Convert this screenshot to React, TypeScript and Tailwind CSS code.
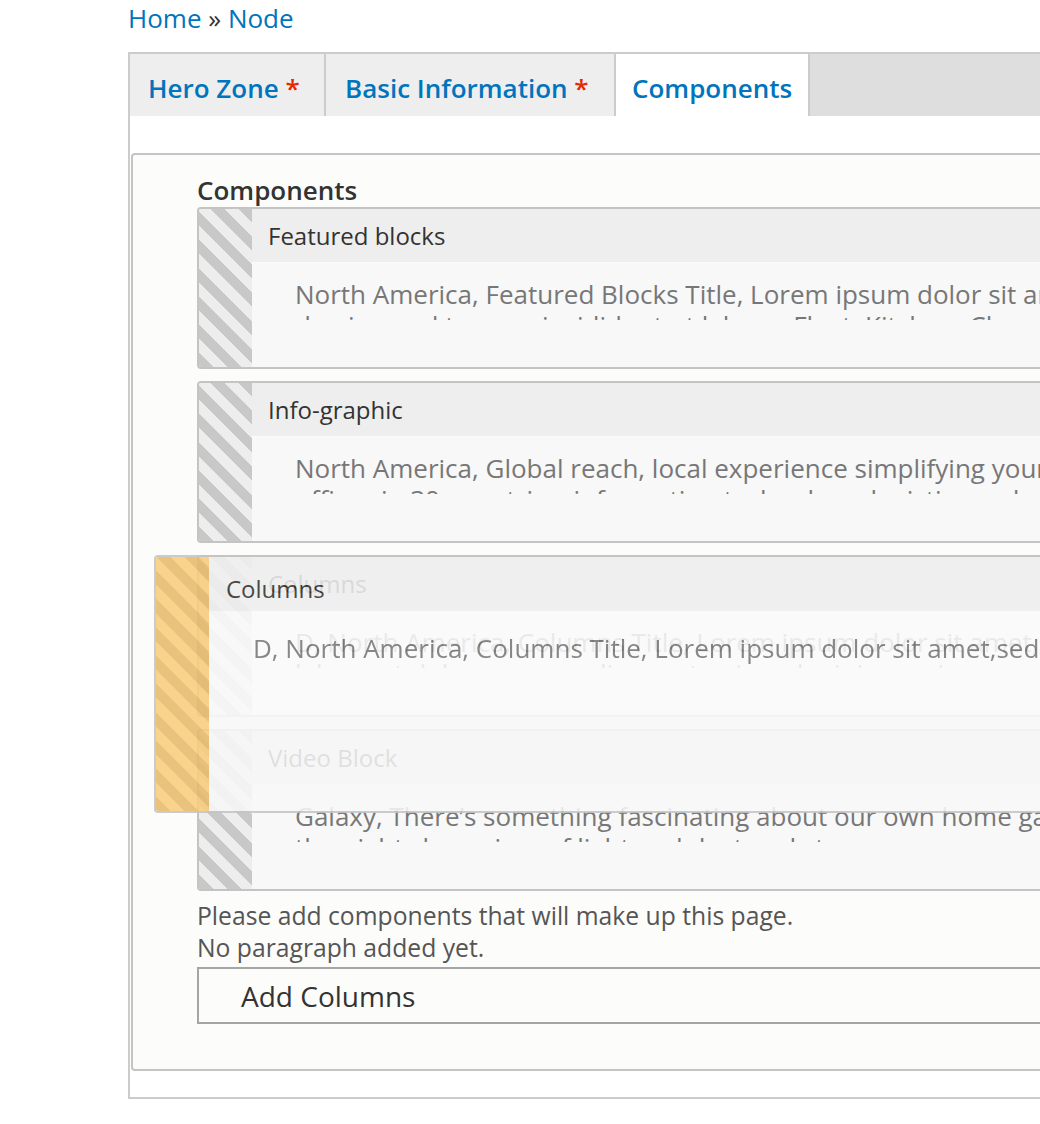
import React from "react";

const GRAY =
  "bg-[repeating-linear-gradient(45deg,#c8c8c8_0px,#c8c8c8_10px,#ededed_10px,#ededed_20px)]";
const ORANGE =
  "bg-[repeating-linear-gradient(45deg,#e6ba6c_0px,#e6ba6c_10px,#f9cc7c_10px,#f9cc7c_20px)]";

type ItemProps = { title: string; text: string };

function Item({ title, text }: ItemProps) {
  return (
    <div className="flex h-[162px] border-2 border-[#c4c4c4] rounded-[4px] overflow-hidden">
      <div className={"w-[53px] shrink-0 " + GRAY} />
      <div className="flex-1 flex flex-col min-w-0">
        <div className="h-[53px] shrink-0 bg-[#eeeeee] pl-[16px] flex items-center text-[24px] text-[#333333]">
          {title}
        </div>
        <div className="flex-1 bg-[#f8f8f8] border-t border-[#fbfbfb] pt-[16px] pl-[43px]">
          <div className="h-[41px] overflow-hidden text-[26px] leading-[31px] text-[#777777]">
            {text}
          </div>
        </div>
      </div>
    </div>
  );
}

export default function App() {
  return (
    <div className="w-[1040px] h-[1124px] overflow-hidden bg-white font-['Open_Sans',sans-serif]">
      <div className="w-[1500px] pl-[128px]">
        <div className="text-[26px] leading-[36px] text-[#0074bd]">
          Home <span className="text-[#333333]">»</span> Node
        </div>
        <div className="mt-[16px] border-t-2 border-l-2 border-b-2 border-[#cccccc]">
          <div className="flex h-[62px] bg-[#dedede]">
            <div className="w-[196px] shrink-0 bg-[#eeeeee] border-r-2 border-[#cccccc] pl-[18px] pt-[16px] text-[26px] leading-[36px] font-semibold text-[#0074bd] whitespace-nowrap">
              Hero Zone <span className="text-[#e62600]">*</span>
            </div>
            <div className="w-[290px] shrink-0 bg-[#eeeeee] border-r-2 border-[#cccccc] pl-[19px] pt-[16px] text-[26px] leading-[36px] font-semibold text-[#0074bd] whitespace-nowrap">
              Basic Information <span className="text-[#e62600]">*</span>
            </div>
            <div className="w-[194px] shrink-0 bg-white border-r-2 border-[#cccccc] pl-[16px] pt-[16px] text-[26px] leading-[36px] font-semibold text-[#0074bd] whitespace-nowrap">
              Components
            </div>
            <div className="flex-1" />
          </div>
          <div className="bg-white pt-[37px] pb-[26px] pl-px">
            <div className="border-2 border-[#c4c4c4] rounded-[4px] bg-[#fcfcfa] pl-[64px] pt-[19px] pb-[45px]">
              <div className="text-[26px] leading-[32px] font-semibold text-[#333333]">
                Components
              </div>
              <div className="relative mt-px flex flex-col gap-[12px]">
                <Item
                  title="Featured blocks"
                  text="North America, Featured Blocks Title, Lorem ipsum dolor sit amet, consectetur adipiscing elit, sed do eiusmod tempor incididunt ut labore. Fleet, Kitchen, Classy, Lifestyle, Marketing, Services, Solutions, Support"
                />
                <Item
                  title="Info-graphic"
                  text="North America, Global reach, local experience simplifying your supply chain across the globe, with offices in 30 countries, information technology, logistics and more"
                />
                <Item
                  title="Columns"
                  text="D, North America, Columns Title, Lorem ipsum dolor sit amet,sed do eiusmod tempor incididunt ut labore et dolore magna aliqua, ut enim ad minim veniam"
                />
                <Item
                  title="Video Block"
                  text="Galaxy, There’s something fascinating about our own home galaxy, the Milky Way, stretching across the night sky, a river of light and dust and stars"
                />
                <div className="absolute left-[-43px] top-[348px] w-[1300px] h-[258px] opacity-[0.88] flex border-2 border-[#c4c4c4] rounded-[4px] overflow-hidden">
                  <div className={"w-[53px] shrink-0 " + ORANGE} />
                  <div className="flex-1 flex flex-col bg-[#f7f7f7]">
                    <div className="h-[54px] shrink-0 bg-[#f0f0f0] pl-[17px] pt-[15px] text-[24px] leading-[33px] text-[#333333]">
                      Columns
                    </div>
                    <div className="h-[106px] shrink-0 bg-[#fafafa] pt-[22px] pl-[44px]">
                      <div className="h-[34px] overflow-hidden text-[26px] leading-[31px] text-[#777777]">
                        D, North America, Columns Title, Lorem ipsum dolor sit amet,sed do eiusmod tempor incididunt ut labore et dolore magna aliqua, ut enim ad minim veniam
                      </div>
                    </div>
                  </div>
                </div>
              </div>
              <div className="mt-[9px] text-[24.7px] leading-[32px] text-[#555555]">
                <div>Please add components that will make up this page.</div>
                <div>No paragraph added yet.</div>
              </div>
              <div className="mt-[3px] h-[57px] border-2 border-[#a5a5a5] bg-[#fcfcfa] pl-[42px] flex items-center text-[28px] text-[#333333]">
                Add Columns
              </div>
            </div>
          </div>
        </div>
      </div>
    </div>
  );
}
